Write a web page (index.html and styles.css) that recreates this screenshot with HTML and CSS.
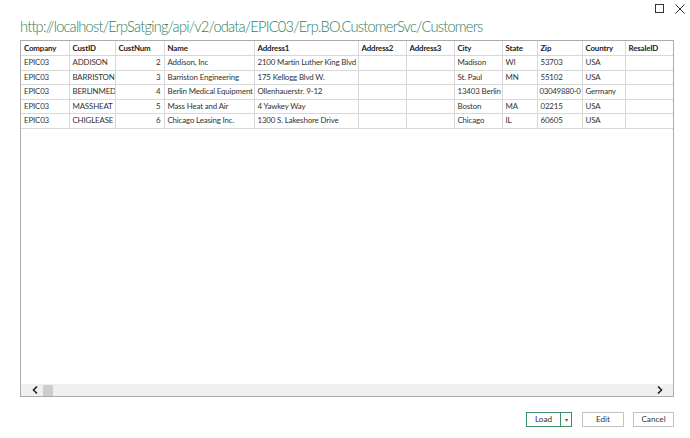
FILE: index.html
```html
<!DOCTYPE html>
<html>
<head>
<meta charset="utf-8">
<link rel="stylesheet" href="styles.css">
</head>
<body>
<div class="dialog">
  <div class="topbar">
    <svg class="winicon" width="9" height="9" viewBox="0 0 9 9"><rect x="0.5" y="0.5" width="8" height="8" fill="none" stroke="#333" stroke-width="1"/></svg>
    <svg class="winicon" width="10" height="10" viewBox="0 0 10 10"><path d="M0.5 0.5 L9.5 9.5 M9.5 0.5 L0.5 9.5" stroke="#333" stroke-width="1"/></svg>
  </div>
  <div class="title">http://localhost/ErpSatging/api/v2/odata/EPIC03/Erp.BO.CustomerSvc/Customers</div>
  <div class="grid">
    <div class="gridarea">
      <table class="data">
        <colgroup>
          <col style="width:48px"><col style="width:46px"><col style="width:49px"><col style="width:90px"><col style="width:104px"><col style="width:48px"><col style="width:48px"><col style="width:48px"><col style="width:35px"><col style="width:45px"><col style="width:43px"><col style="width:48px">
        </colgroup>
        <thead>
          <tr><th>Company</th><th>CustID</th><th>CustNum</th><th>Name</th><th>Address1</th><th>Address2</th><th>Address3</th><th>City</th><th>State</th><th>Zip</th><th>Country</th><th>ResaleID</th></tr>
        </thead>
        <tbody>
          <tr><td>EPIC03</td><td>ADDISON</td><td class="num">2</td><td>Addison, Inc</td><td>2100 Martin Luther King Blvd</td><td></td><td></td><td>Madison</td><td>WI</td><td>53703</td><td>USA</td><td></td></tr>
          <tr><td>EPIC03</td><td>BARRISTON</td><td class="num">3</td><td>Barriston Engineering</td><td>175 Kellogg Blvd W.</td><td></td><td></td><td>St. Paul</td><td>MN</td><td>55102</td><td>USA</td><td></td></tr>
          <tr><td>EPIC03</td><td>BERLINMED</td><td class="num">4</td><td>Berlin Medical Equipment</td><td>Ollenhauerstr. 9-12</td><td></td><td></td><td>13403 Berlin</td><td></td><td class="tight">03049880-0</td><td>Germany</td><td></td></tr>
          <tr><td>EPIC03</td><td>MASSHEAT</td><td class="num">5</td><td>Mass Heat and Air</td><td>4 Yawkey Way</td><td></td><td></td><td>Boston</td><td>MA</td><td>02215</td><td>USA</td><td></td></tr>
          <tr><td>EPIC03</td><td>CHIGLEASE</td><td class="num">6</td><td>Chicago Leasing Inc.</td><td>1300 S. Lakeshore Drive</td><td></td><td></td><td>Chicago</td><td>IL</td><td>60605</td><td>USA</td><td></td></tr>
        </tbody>
      </table>
    </div>
    <div class="hscroll">
      <svg class="arrow" width="6" height="8" viewBox="0 0 6 8"><path d="M5 0.5 L1.5 4 L5 7.5" fill="none" stroke="#222" stroke-width="1.6"/></svg>
      <div class="thumb"></div>
      <div class="track"></div>
      <svg class="arrow" width="6" height="8" viewBox="0 0 6 8"><path d="M1 0.5 L4.5 4 L1 7.5" fill="none" stroke="#222" stroke-width="1.6"/></svg>
    </div>
  </div>
  <div class="buttons">
    <div class="btn load"><span class="loadlabel">Load</span><span class="dd">&#9662;</span></div>
    <div class="btn edit">Edit</div>
    <div class="btn cancel">Cancel</div>
  </div>
</div>
</body>
</html>
```
FILE: styles.css
```css
html, body {
  margin: 0;
  padding: 0;
  background: #ffffff;
}
.dialog {
  width: 690px;
  height: 438px;
  display: flex;
  flex-direction: column;
  font-family: "Lato", "Open Sans", sans-serif;
  color: #222;
}
.topbar {
  height: 17px;
  display: flex;
  justify-content: flex-end;
  align-items: center;
  gap: 11px;
  padding-right: 5px;
}
.winicon {
  display: block;
}
.title {
  height: 23px;
  padding-left: 20px;
  font-size: 14.6px;
  letter-spacing: -0.77px;
  font-weight: 300;
  color: #2f7d5c;
  line-height: 20px;
  white-space: nowrap;
}
.grid {
  margin-left: 20px;
  width: 652px;
  height: 355px;
  border: 1px solid #acacac;
  display: flex;
  flex-direction: column;
}
.gridarea {
  flex: 1;
  overflow: hidden;
  background: #fff;
}
.data {
  border-collapse: collapse;
  table-layout: fixed;
  width: 652px;
  font-size: 7.9px;
  letter-spacing: -0.15px;
  color: #333;
}
.data th, .data td {
  border-right: 1px solid #d8d8d8;
  border-bottom: 1px solid #d8d8d8;
  height: 13.5px;
  padding: 0 0 0 3px;
  text-align: left;
  white-space: nowrap;
  overflow: hidden;
  line-height: 13px;
}
.data td.tight {
  padding-left: 2px;
  letter-spacing: -0.3px;
}
.data th {
  font-weight: 700;
  height: 14px;
  color: #222;
}
.data th:last-child, .data td:last-child {
  border-right: none;
}
.data td.num {
  text-align: right;
  padding-right: 3px;
}
.hscroll {
  height: 12px;
  background: #f0f0f0;
  display: flex;
  align-items: center;
  padding: 0 10px 0 11px;
  gap: 5px;
}
.arrow {
  display: block;
}
.thumb {
  width: 10px;
  height: 11px;
  background: #cdcdcd;
}
.track {
  flex: 1;
}
.buttons {
  display: flex;
  justify-content: flex-end;
  gap: 9px;
  padding-right: 16px;
  margin-top: 15px;
}
.btn {
  height: 13px;
  border: 1px solid #c3c3c3;
  font-size: 8.2px;
  line-height: 13px;
  text-align: center;
  background: #fff;
  color: #333;
}
.btn.edit {
  width: 40px;
}
.btn.cancel {
  width: 39px;
}
.btn.load {
  width: 44px;
  margin-right: 1px;
  border-color: #3f8f66;
  display: flex;
}
.loadlabel {
  flex: 1;
}
.dd {
  width: 10px;
  border-left: 1px solid #3f8f66;
  font-size: 6px;
  color: #555;
}
```
